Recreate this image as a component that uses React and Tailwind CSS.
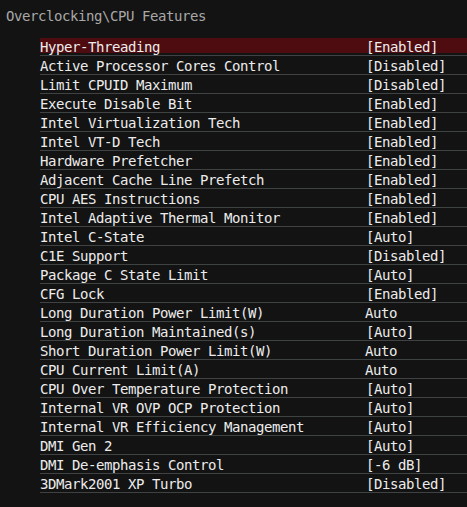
const items = [
  ['Hyper-Threading', '[Enabled]'],
  ['Active Processor Cores Control', '[Disabled]'],
  ['Limit CPUID Maximum', '[Disabled]'],
  ['Execute Disable Bit', '[Enabled]'],
  ['Intel Virtualization Tech', '[Enabled]'],
  ['Intel VT-D Tech', '[Enabled]'],
  ['Hardware Prefetcher', '[Enabled]'],
  ['Adjacent Cache Line Prefetch', '[Enabled]'],
  ['CPU AES Instructions', '[Enabled]'],
  ['Intel Adaptive Thermal Monitor', '[Enabled]'],
  ['Intel C-State', '[Auto]'],
  ['C1E Support', '[Disabled]'],
  ['Package C State Limit', '[Auto]'],
  ['CFG Lock', '[Enabled]'],
  ['Long Duration Power Limit(W)', 'Auto'],
  ['Long Duration Maintained(s)', '[Auto]'],
  ['Short Duration Power Limit(W)', 'Auto'],
  ['CPU Current Limit(A)', 'Auto'],
  ['CPU Over Temperature Protection', '[Auto]'],
  ['Internal VR OVP OCP Protection', '[Auto]'],
  ['Internal VR Efficiency Management', '[Auto]'],
  ['DMI Gen 2', '[Auto]'],
  ['DMI De-emphasis Control', '[-6 dB]'],
  ['3DMark2001 XP Turbo', '[Disabled]'],
]

function Row({ label, value, selected }) {
  const plain = !value.startsWith('[')
  return (
    <div className="h-[19px] border-b border-[#3e4242] pt-px">
      <div
        className={`grid h-[15px] grid-cols-[326px_1fr] leading-[18px] ${selected ? 'bg-[#4e0c10]' : ''}`}
      >
        <span className="whitespace-pre">{label}</span>
        <span className={`whitespace-pre ${plain ? '-ml-[1px]' : ''}`}>{value}</span>
      </div>
    </div>
  )
}

export default function App() {
  return (
    <div
      className="h-[507px] w-[467px] overflow-hidden bg-[#131313] pt-[7px] text-[14px] tracking-[-0.43px] text-[#ececec]"
      style={{ fontFamily: '"DejaVu Sans Mono", monospace' }}
    >
      <div className="h-[18px] pl-[6px] leading-[18px] text-[#a8a8a8]">Overclocking\CPU Features</div>
      <div className="mt-[12px] ml-[40px]">
        {items.map(([label, value], i) => (
          <Row key={label} label={label} value={value} selected={i === 0} />
        ))}
      </div>
    </div>
  )
}
